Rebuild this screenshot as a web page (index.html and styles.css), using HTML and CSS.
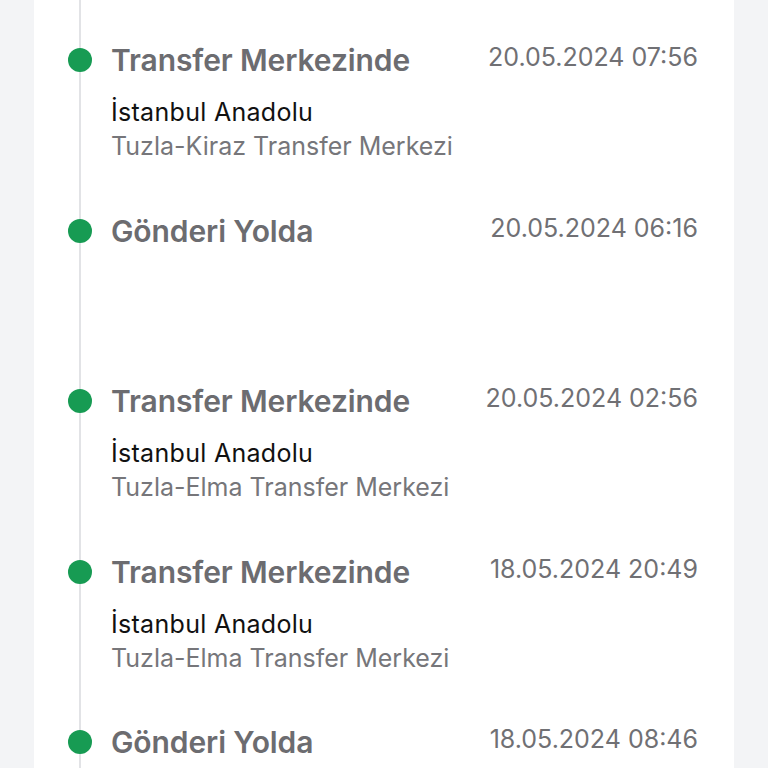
FILE: index.html
```html
<!DOCTYPE html>
<html lang="tr">
<head>
<meta charset="utf-8">
<link rel="stylesheet" href="styles.css">
</head>
<body>
<main class="card">
  <ol class="timeline">
    <li class="event">
      <span class="dot"></span>
      <div class="event-head">
        <span class="event-title">Transfer Merkezinde</span>
        <span class="event-date">20.05.2024 07:56</span>
      </div>
      <div class="event-place">İstanbul Anadolu</div>
      <div class="event-sub">Tuzla-Kiraz Transfer Merkezi</div>
    </li>
    <li class="event">
      <span class="dot"></span>
      <div class="event-head">
        <span class="event-title">Gönderi Yolda</span>
        <span class="event-date">20.05.2024 06:16</span>
      </div>
    </li>
    <li class="event">
      <span class="dot"></span>
      <div class="event-head">
        <span class="event-title">Transfer Merkezinde</span>
        <span class="event-date">20.05.2024 02:56</span>
      </div>
      <div class="event-place">İstanbul Anadolu</div>
      <div class="event-sub">Tuzla-Elma Transfer Merkezi</div>
    </li>
    <li class="event">
      <span class="dot"></span>
      <div class="event-head">
        <span class="event-title">Transfer Merkezinde</span>
        <span class="event-date">18.05.2024 20:49</span>
      </div>
      <div class="event-place">İstanbul Anadolu</div>
      <div class="event-sub">Tuzla-Elma Transfer Merkezi</div>
    </li>
    <li class="event">
      <span class="dot"></span>
      <div class="event-head">
        <span class="event-title">Gönderi Yolda</span>
        <span class="event-date">18.05.2024 08:46</span>
      </div>
    </li>
  </ol>
</main>
</body>
</html>
```
FILE: styles.css
```css
* { box-sizing: border-box; }
html, body {
  margin: 0;
  height: 100%;
  overflow: hidden;
}
body {
  background: #f3f4f6;
  font-family: Inter, "Noto Sans", sans-serif;
}
.card {
  margin-left: 34px;
  width: 700px;
  height: 768px;
  overflow: hidden;
  background: #ffffff;
  padding: 0 36px 0 45px;
}
.timeline {
  list-style: none;
  margin: 0;
  padding: 43px 0 0 0;
  border-left: 2px solid #e2e3e6;
}
.event {
  position: relative;
  height: 170.5px;
  padding-left: 30px;
}
.event:last-child {
  height: 60px;
}
.dot {
  position: absolute;
  left: -13px;
  top: 5px;
  width: 24px;
  height: 24px;
  border-radius: 50%;
  background: #179b53;
}
.event-head {
  display: flex;
  justify-content: space-between;
  align-items: center;
  height: 34px;
}
.event-title {
  font-size: 30px;
  font-weight: 600;
  color: #6c6c70;
  letter-spacing: -0.1px;
}
.event-date {
  font-size: 25px;
  color: #707074;
  margin-top: -6px;
}
.event-place {
  margin-top: 18px;
  font-size: 25px;
  line-height: 34px;
  color: #111111;
  letter-spacing: 0.3px;
}
.event-sub {
  font-size: 25px;
  line-height: 34px;
  color: #76767a;
}
```
